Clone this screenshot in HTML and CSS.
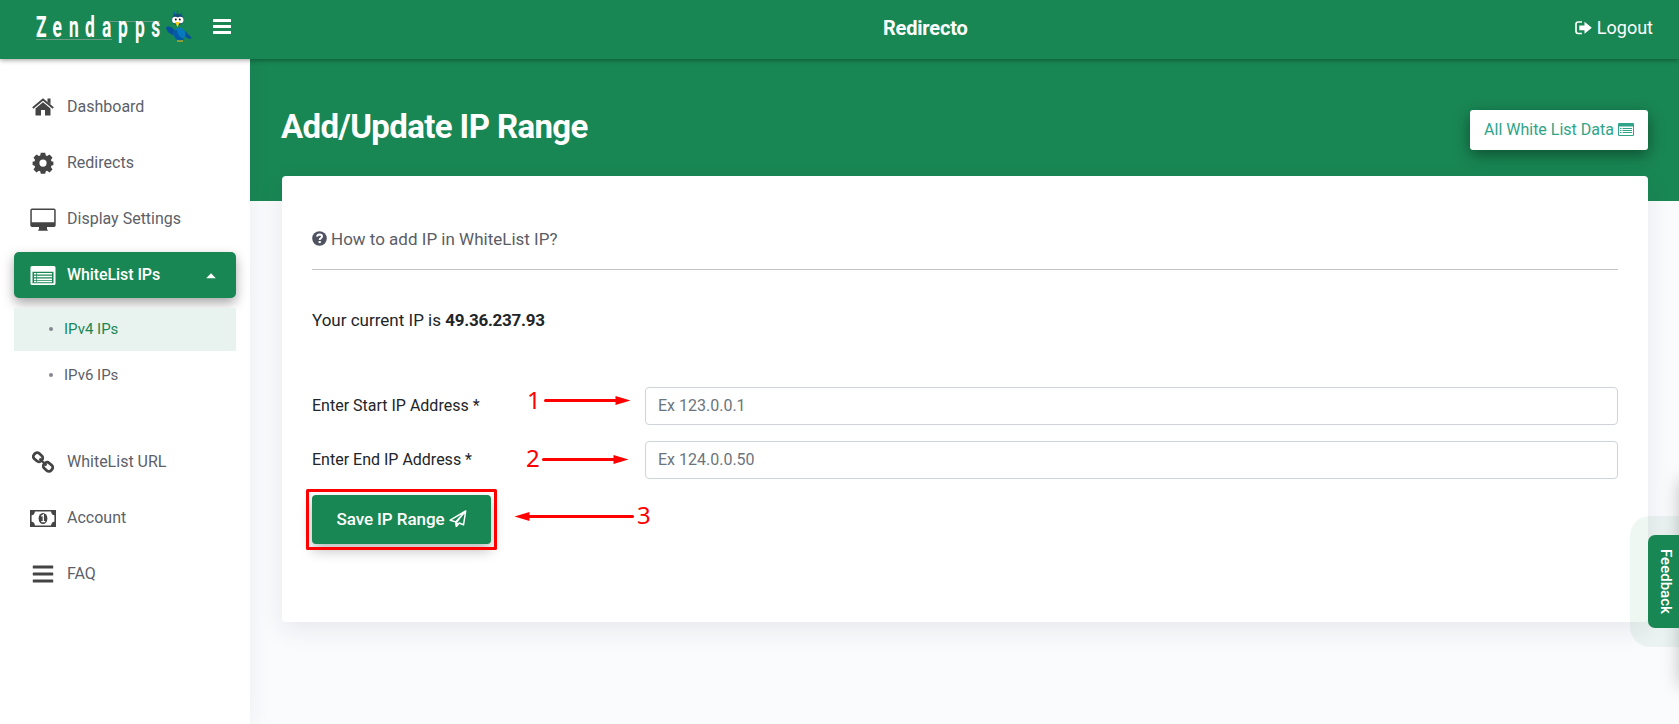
FILE: index.html
```html
<!DOCTYPE html>
<html lang="en">
<head>
<meta charset="utf-8">
<title>Redirecto</title>
<link rel="stylesheet" href="styles.css">
</head>
<body>
<header class="topbar">
  <div class="brand">
    <svg class="logo" width="160" height="40" viewBox="0 0 160 40">
      <path d="M0 29.5H76M67 11.500H124" stroke="#6d9c86" stroke-width="1"/>
      <text class="logo-text" transform="scale(.6 1)" x="0 27.500 55 81.500 110 136.500 165 192" y="27.500">Zendapps</text>
      <g>
        <path d="M137 8l1-7 2 4 2-5 0 5 4-2-2 6z" fill="#075ca5"/>
        <path d="M130 17q5-2 10 5l9-1 7 7-3 1-8-5-8 1q-7-3-7-8z" fill="#06509e"/>
        <ellipse cx="143.500" cy="24" rx="6" ry="6.500" fill="#0879bd"/>
        <path d="M137 21q1 9 7 10l5-2q-7-1-8-9z" fill="#065aa5"/>
        <ellipse cx="141.800" cy="9.500" rx="6" ry="5.500" fill="#174d73"/>
        <circle cx="139.300" cy="10" r="3.200" fill="#fff"/><circle cx="144.300" cy="10" r="3.200" fill="#fff"/>
        <circle cx="139.800" cy="9.500" r="1" fill="#111"/><circle cx="143.800" cy="9.500" r="1" fill="#111"/>
        <path d="M139 12h5l-2.500 5z" fill="#f5d319"/>
        <path d="M141 31h6" stroke="#d9b81e" stroke-width="1.200"/>
      </g>
    </svg>
    <svg class="burger" width="18" height="15" viewBox="0 0 18 15" fill="#fff"><rect width="18" height="3" rx=".5"/><rect y="6" width="18" height="3" rx=".5"/><rect y="12" width="18" height="3" rx=".5"/></svg>
  </div>
  <div class="app-name">Redirecto</div>
  <a class="logout"><svg width="17" height="14" viewBox="0 0 17 14"><path d="M7 1H3.200Q1 1 1 3.200V10.300Q1 12.500 3.200 12.500H7" fill="none" stroke="#fff" stroke-width="1.700"/><path d="M4.300 4.500H9.500V.8L16.800 6.800 9.500 12.700V9.200H4.300z" fill="#fff"/></svg><span>Logout</span></a>
</header>
<div class="shell">
  <nav class="sidebar">
    <a class="item"><span class="ico"><svg width="22" height="18" viewBox="0 0 22 18"><path d="M11 4.200L18.500 10.500V17.500H13V12H9V17.500H3.500V10.500z" fill="#444"/><path d="M.8 10L11 1.500 21.200 10" fill="none" stroke="#444" stroke-width="1.900"/><path d="M15.500.5h3v6l-3-2.500z" fill="#444"/></svg></span><span>Dashboard</span></a>
    <a class="item"><span class="ico"><svg width="22" height="22" viewBox="0 0 22 22"><path d="M8.800.8h4.400l.6 2.800 1.300.5 2.400-1.600 3 3-1.600 2.400.5 1.300 2 .6v3.200l-2 .7-.5 1.300 1.600 2.400-3 3-2.400-1.600-1.300.5-.6 2.400H8.800l-.6-2.400-1.300-.5-2.400 1.600-3-3 1.600-2.400-.5-1.300-2-.7V9.800l2-.6.5-1.300-1.600-2.400 3-3 2.400 1.600 1.300-.5zM11 7.500a3.600 3.600 0 1 0 0 7.200 3.600 3.600 0 0 0 0-7.200z" fill="#444" fill-rule="evenodd"/></svg></span><span>Redirects</span></a>
    <a class="item"><span class="ico"><svg width="26" height="23" viewBox="0 0 26 23"><path d="M2 .5H24Q25.700.5 25.700 2.200V17.300Q25.700 19 24 19H17V21L18 22.800H8L9 21V19H2Q.3 19 .3 17.300V2.200Q.3.5 2 .5zM1.800 2V14.300H24.200V2z" fill="#444" fill-rule="evenodd"/></svg></span><span>Display Settings</span></a>
    <a class="item active"><span class="ico"><svg width="26" height="19" viewBox="0 0 26 19"><path d="M2 0H24Q25.500 0 25.500 1.500V17.500Q25.500 19 24 19H2Q.5 19 .5 17.500V1.500Q.5 0 2 0zM2.500 5.800V17.200H23.500V5.800z" fill="#fff" fill-rule="evenodd"/><path d="M4 7.800H22M4 10.500H22M4 13.200H22M4 15.600H22" stroke="#fff" stroke-width="1.500"/><path d="M6.500 7V16" stroke="#198754" stroke-width=".7"/></svg></span><span>WhiteList IPs</span><svg class="caret" width="10" height="6" viewBox="0 0 10 6"><path d="M5 .3L9.800 5.300H.2z" fill="#fff"/></svg></a>
    <div class="submenu">
      <a class="sub current"><i></i>IPv4 IPs</a>
      <a class="sub"><i></i>IPv6 IPs</a>
    </div>
    <a class="item"><span class="ico"><svg width="22" height="22" viewBox="0 0 22 22" fill="none" stroke="#444" stroke-width="2.800"><rect x="-4.700" y="-3.600" width="9.400" height="7.200" rx="2.900" transform="translate(6 6.200) rotate(42)"/><rect x="-4.700" y="-3.600" width="9.400" height="7.200" rx="2.900" transform="translate(16 15.800) rotate(42)"/><path d="M7.500 7.500L14.500 14.500" stroke-width="2.200"/></svg></span><span>WhiteList URL</span></a>
    <a class="item"><span class="ico"><svg width="26" height="17" viewBox="0 0 26 17"><path d="M0 0H26V17H0zM5 1.500Q4.500 5 1.600 5.300V11.700Q4.500 12 5 15.500H21Q21.500 12 24.400 11.700V5.300Q21.500 5 21 1.500z" fill="#444" fill-rule="evenodd"/><ellipse cx="13" cy="8.500" rx="4.400" ry="5.500" fill="#444"/><path d="M11.300 6.200L13.300 5V11.500M11.200 11.700H15.200" fill="none" stroke="#fff" stroke-width="1.300"/></svg></span><span>Account</span></a>
    <a class="item"><span class="ico"><svg width="22" height="18" viewBox="0 0 22 18" fill="#444"><rect x=".8" y=".6" width="20.400" height="3" rx=".6"/><rect x=".8" y="7.600" width="20.400" height="3" rx=".6"/><rect x=".8" y="14.600" width="20.400" height="3" rx=".6"/></svg></span><span>FAQ</span></a>
  </nav>
  <main class="content">
    <div class="hero">
      <h1>Add/Update IP Range</h1>
      <a class="list-btn"><span>All White List Data</span><svg width="16" height="13" viewBox="0 0 16 13"><path d="M1.200 0H14.800Q16 0 16 1.200V11.800Q16 13 14.800 13H1.200Q0 13 0 11.800V1.200Q0 0 1.200 0zM1 3.600V12H15V3.600z" fill="#2fa488" fill-rule="evenodd"/><path d="M2 5.500H3.500M4.500 5.500H14M2 7.500H3.500M4.500 7.500H14M2 9.500H3.500M4.500 9.500H14" stroke="#2fa488"/></svg></a>
    </div>
    <section class="card">
      <div class="help"><svg width="15" height="15" viewBox="0 0 15 15"><circle cx="7.500" cy="7.500" r="7.300" fill="#4f5261"/><path d="M5 5.600Q5.400 3.500 7.600 3.500 10 3.600 10 5.500 10 6.700 8.600 7.400 7.700 7.900 7.700 8.900" fill="none" stroke="#fff" stroke-width="2"/><rect x="6.600" y="10" width="2.200" height="2.100" fill="#fff"/></svg><span>How to add IP in WhiteList IP?</span></div>
      <p class="current-ip">Your current IP is <b>49.36.237.93</b></p>
      <form class="form">
        <div class="row"><label>Enter Start IP Address *</label><input type="text" placeholder="Ex 123.0.0.1"></div>
        <div class="row"><label>Enter End IP Address *</label><input type="text" placeholder="Ex 124.0.0.50"></div>
        <button type="button" class="save"><span>Save IP Range</span><svg width="18" height="18" viewBox="0 0 18 18"><path d="M1.200 10.200L16.700 1 14.500 14.800 10.200 13 7.600 16.300 6.700 11.900zM6.700 11.900L16.500 1.300" fill="none" stroke="#fff" stroke-width="1.500" stroke-linejoin="round"/><path d="M6.200 12.200L16 2 8.200 12.700 9.600 13.700 6.800 17.500z" fill="#fff"/></svg></button>
      </form>
    </section>
  </main>
</div>
<div class="feedback"><a>Feedback</a></div>
<div class="drawer"></div>
<svg class="notes" width="400" height="200" viewBox="290 370 400 200">
  <g stroke="#f00" stroke-width="3" stroke-linecap="round"><path d="M545.500 400.500H616"/><path d="M543.500 459.500H614"/><path d="M529 516.500H632.500"/></g>
  <g fill="#f00"><path d="M615.500 396L630.500 400.500 615.500 405z"/><path d="M613.500 455L628.500 459.500 613.500 464z"/><path d="M529.500 512L514.500 516.500 529.500 521z"/></g>
  <rect x="307.500" y="490.500" width="188" height="58" fill="none" stroke="#f00" stroke-width="3" stroke-linejoin="round"/>
  <g class="note-num"><text x="527" y="409">1</text><text x="526" y="467">2</text><text x="637" y="524">3</text></g>
</svg>
</body>
</html>
```
FILE: styles.css
```css
* { box-sizing: border-box; }
body { margin: 0; height: 724px; overflow: hidden; position: relative; background: #fafbfd; font-family: Roboto, sans-serif; font-size: 16px; line-height: 24px; color: #212529; }
svg { display: block; flex: none; }
.topbar { position: relative; z-index: 3; height: 59px; display: grid; grid-template-columns: 847px auto 1fr; align-items: center; padding: 0 26px 0 36px; background: #198754; color: #fff; box-shadow: 0 1px 5px rgba(0,0,0,.4); }
.brand { display: flex; align-items: flex-start; height: 39px; gap: 17px; }
.logo { overflow: visible; }
.logo-text { font-size: 29px; font-weight: 700; fill: #fff; }
.burger { margin-top: 9px; }
.app-name { font-size: 20px; font-weight: 700; letter-spacing: -.2px; padding-bottom: 4px; }
.logout { justify-self: end; display: flex; align-items: center; gap: 5px; font-size: 18px; padding-bottom: 4px; }
.shell { display: flex; height: 665px; }
.sidebar { width: 250px; padding: 25px 14px; background: #fff; display: flex; flex-direction: column; gap: 10px; position: relative; z-index: 1; box-shadow: 0 0 22px rgba(30,40,50,.07); }
.item { height: 46px; flex: none; display: flex; align-items: center; padding-left: 16px; gap: 11px; color: #5d5f69; border-radius: 5px; }
.item > span:nth-child(2) { padding-bottom: 1px; }
.ico { width: 26px; display: flex; justify-content: center; }
.active { background: #198754; color: #fff; font-weight: 500; letter-spacing: -.08px; box-shadow: 0 5px 12px rgba(0,0,0,.35); }
.caret { margin: 2px 20px 0 auto; }
.submenu { display: grid; grid-auto-rows: 43px; gap: 3px; height: 121px; flex: none; font-size: 15px; }
.sub { display: flex; align-items: center; gap: 11px; padding-left: 35px; color: #5d5f69; padding-bottom: 1px; }
.sub i { width: 4px; height: 4px; border-radius: 50%; background: #858891; }
.current { background: #e8f3ef; color: #198754; }
.content { flex: 1; }
.hero { height: 142px; background: #198754; padding: 51px 31px 0 32px; display: flex; align-items: flex-start; justify-content: space-between; }
h1 { margin: -3px 0 0 -1px; color: #fff; font-size: 33px; line-height: 40px; font-weight: 700; letter-spacing: -.61px; }
.list-btn { width: 178px; height: 40px; border-radius: 3px; background: #fff; color: #2fa488; display: flex; align-items: center; justify-content: center; gap: 4px; box-shadow: 0 5px 16px rgba(0,0,0,.42); }
.list-btn span { padding-bottom: 1px; }
.list-btn svg { margin-top: -2px; }
.card { margin: -25px 31px 0 32px; height: 446px; padding: 50px 30px 0; background: #fff; border-radius: 4px; box-shadow: 0 7px 26px rgba(30,35,50,.09); }
.help { display: flex; align-items: center; gap: 4px; height: 44px; padding-bottom: 18px; color: #5b5d66; font-size: 17px; border-bottom: 1px solid #c4c4c4; }
.current-ip { margin: 38px 0 55px; font-size: 17px; }
.current-ip b { letter-spacing: -.25px; }
.form { display: grid; gap: 16px; }
.row { display: grid; grid-template-columns: 333px 1fr; align-items: center; }
input { height: 38px; width: 100%; border: 1px solid #ced4da; border-radius: 4px; padding: 0 12px 2px; font: 16px Roboto, sans-serif; }
input::placeholder { color: #6c757d; opacity: 1; }
.save { width: 179px; height: 49px; border: 0; border-radius: 4px; background: #198754; color: #fff; font: 500 17px Roboto, sans-serif; letter-spacing: -.07px; display: flex; align-items: center; justify-content: center; gap: 4px; padding: 0 0 2px; box-shadow: 0 6px 14px rgba(0,0,0,.28); }
.feedback { position: absolute; z-index: 4; right: 0; top: 516px; width: 49px; height: 131px; padding: 19px 0 19px 18px; border-radius: 20px 0 0 20px; background: rgba(25,135,84,.07); }
.feedback a { display: flex; align-items: center; justify-content: center; width: 31px; height: 93px; padding-left: 4px; border-radius: 7px 0 0 7px; background: #198754; color: #fff; font-size: 15px; font-weight: 500; writing-mode: vertical-rl; }
.drawer { position: absolute; left: 1680px; top: 480px; width: 20px; height: 205px; box-shadow: 0 0 18px rgba(0,0,0,.25); }
.notes { position: absolute; z-index: 2; left: 290px; top: 370px; pointer-events: none; }
.note-num { font: 24px "Noto Sans", sans-serif; fill: #f00; }
```
